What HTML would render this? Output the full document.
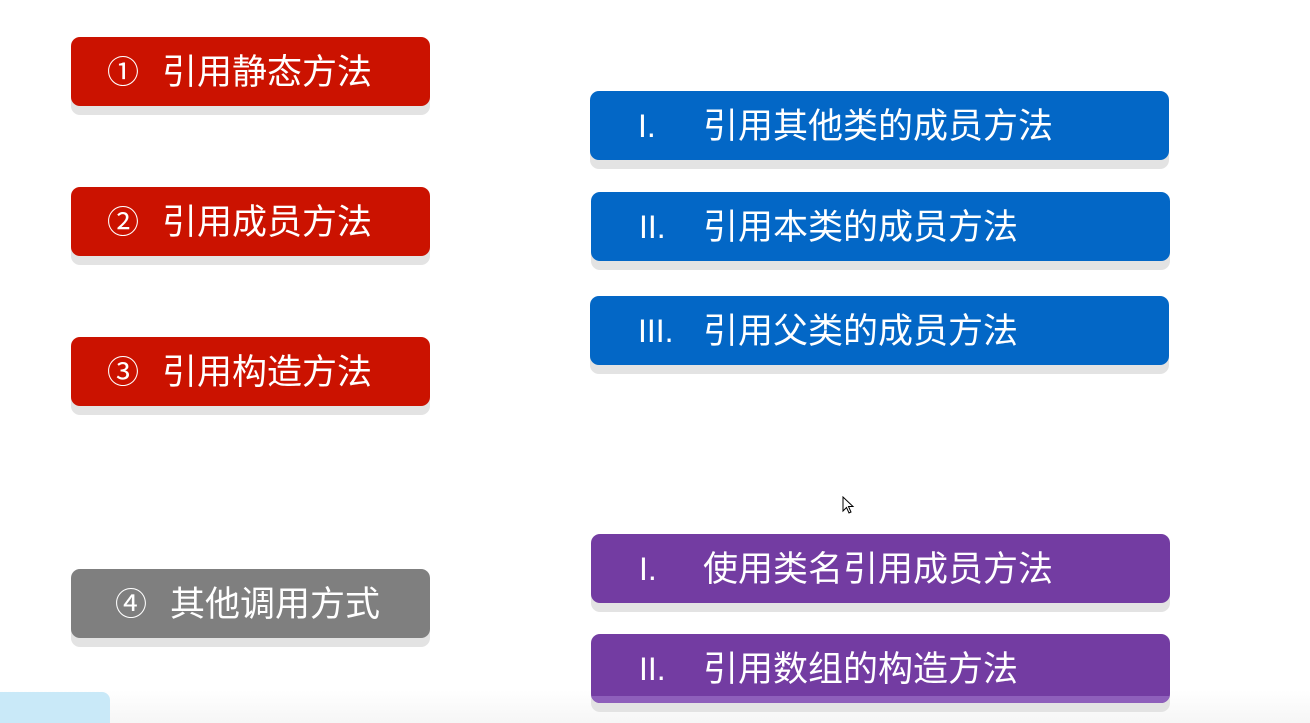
<!DOCTYPE html>
<html><head><meta charset="utf-8"><style>
html,body{margin:0;padding:0;width:1310px;height:723px;overflow:hidden;background:#fff;position:relative;
font-family:"Liberation Sans","Noto Sans CJK SC",sans-serif;}
.b{position:absolute;height:69px;border-radius:9px;color:#fff;font-size:35px;line-height:69px;box-shadow:0 9px 0 #e3e3e3;white-space:nowrap}
.b span{position:absolute;top:1px}
.r{background:#cb1200;left:71px;width:359px}
.g{background:#7f7f7f;left:71px;width:359px}
.u{background:#0367c6}
.p{background:#733ca2}
.w{left:591px;width:579px}
.n{font-size:32px}
</style></head><body>
<div style="position:absolute;left:0;top:690px;width:1310px;height:33px;background:linear-gradient(#fff,#f6f6f6)"></div>
<div style="position:absolute;left:0;top:692px;width:110px;height:31px;background:#c9e9f8;border-radius:0 8px 0 0"></div>

<div class="b r" style="top:37px"><span class="n" style="left:36px">①</span><span style="left:91px">引用静态方法</span></div>
<div class="b r" style="top:187px"><span class="n" style="left:36px">②</span><span style="left:91px">引用成员方法</span></div>
<div class="b r" style="top:337px"><span class="n" style="left:36px">③</span><span style="left:91px">引用构造方法</span></div>
<div class="b g" style="top:569px"><span class="n" style="left:44px">④</span><span style="left:99px">其他调用方式</span></div>

<div class="b u w" style="top:91px;left:590px"><span class="n" style="left:48px">I.</span><span style="left:113px">引用其他类的成员方法</span></div>
<div class="b u w" style="top:192px"><span class="n" style="left:48px">II.</span><span style="left:112px">引用本类的成员方法</span></div>
<div class="b u w" style="top:296px;left:590px"><span class="n" style="left:48px">III.</span><span style="left:113px">引用父类的成员方法</span></div>

<div class="b p w" style="top:534px"><span class="n" style="left:48px">I.</span><span style="left:112px">使用类名引用成员方法</span></div>
<div class="b p w" style="top:634px;overflow:hidden"><span class="n" style="left:48px">II.</span><span style="left:112px">引用数组的构造方法</span>
<div style="position:absolute;left:0;bottom:0;width:100%;height:7px;background:#8e5fbb;border-radius:0 0 9px 9px"></div></div>
<svg style="position:absolute;left:842px;top:496px" width="14" height="20" viewBox="0 0 14 20"><path d="M1 1 L1 15 L4.5 11.5 L7 17 L9 16 L6.5 10.5 L11 10.5 Z" fill="#fff" stroke="#000" stroke-width="1"/></svg>
</body></html>
